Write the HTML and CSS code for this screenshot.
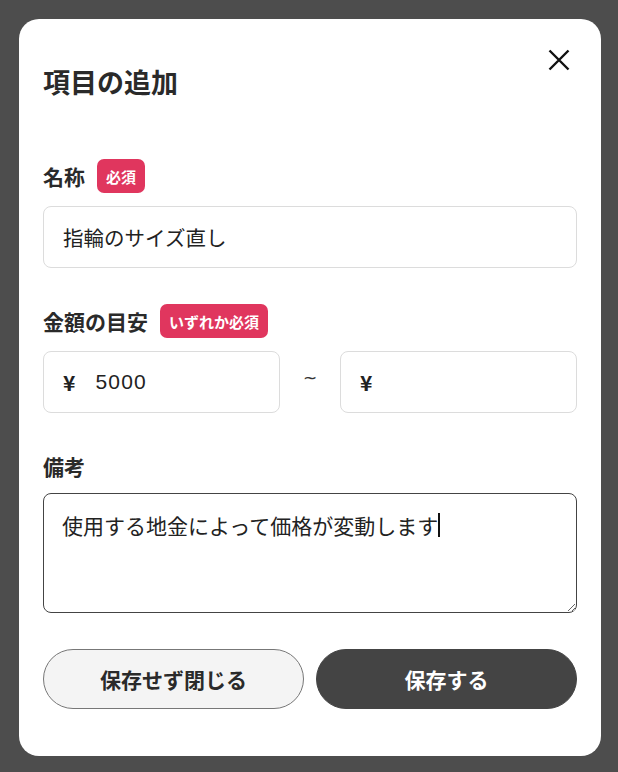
FILE: index.html
```html
<!DOCTYPE html>
<html lang="ja">
<head>
    <meta charset="UTF-8">
    <meta name="viewport" content="width=device-width, initial-scale=1.0">
    <title>項目の追加</title>
    <link rel="stylesheet" href="styles.css">
</head>
<body>
    <div class="modal">
        <div class="modal-header">
            <h1 class="modal-title">項目の追加</h1>
            <button class="close-button" aria-label="閉じる">
                <svg width="22" height="22" viewBox="0 0 22 22">
                    <path d="M1.5 1.5 L20.5 20.5 M20.5 1.5 L1.5 20.5" stroke="#111" stroke-width="2.4" fill="none"/>
                </svg>
            </button>
        </div>

        <!-- 名称 -->
        <div class="field field-first">
            <div class="field-label">
                <span>名称</span>
                <span class="badge">必須</span>
            </div>
            <input class="text-input" type="text" value="指輪のサイズ直し">
        </div>

        <!-- 金額の目安 -->
        <div class="field">
            <div class="field-label">
                <span>金額の目安</span>
                <span class="badge">いずれか必須</span>
            </div>
            <div class="price-row">
                <div class="price-input">
                    <span class="yen">¥</span>
                    <input type="text" value="5000">
                </div>
                <span class="tilde">~</span>
                <div class="price-input">
                    <span class="yen">¥</span>
                    <input type="text" value="">
                </div>
            </div>
        </div>

        <!-- 備考 -->
        <div class="field">
            <div class="field-label field-label-tight">
                <span>備考</span>
            </div>
            <div class="note-wrap">
                <textarea class="note-input">使用する地金によって価格が変動します</textarea>
                <span class="caret"></span>
            </div>
        </div>

        <div class="modal-actions">
            <button class="btn btn-cancel">保存せず閉じる</button>
            <button class="btn btn-save">保存する</button>
        </div>
    </div>
</body>
</html>
```

FILE: styles.css
```css
body {
    margin: 0;
    background: #4d4d4d;
    font-family: "Noto Sans CJK JP", "Noto Sans", sans-serif;
    color: #222;
}

.modal {
    box-sizing: border-box;
    width: 582px;
    margin: 19px;
    padding: 21px 24px 47px;
    background: #fff;
    border-radius: 20px;
}

.modal-header {
    display: flex;
    justify-content: space-between;
    align-items: flex-start;
}

.modal-title {
    margin: 24px 0 0;
    font-size: 27px;
    line-height: 36px;
    font-weight: 700;
    color: #2a2a2a;
}

.close-button {
    width: 40px;
    height: 40px;
    margin-right: -2px;
    padding: 0;
    border: none;
    background: none;
    display: flex;
    align-items: center;
    justify-content: center;
    cursor: pointer;
}

.field {
    margin-top: 36px;
}

.field-first {
    margin-top: 59px;
}

.field-label {
    display: flex;
    align-items: center;
    gap: 12px;
    height: 34px;
    margin-bottom: 13px;
    font-size: 21px;
    font-weight: 700;
    color: #2a2a2a;
}

.field-label-tight {
    margin-bottom: 10px;
}

.badge {
    display: inline-flex;
    align-items: center;
    height: 34px;
    padding: 0 9px;
    background: #e0365e;
    color: #fff;
    font-size: 15px;
    font-weight: 700;
    border-radius: 7px;
}

.text-input {
    box-sizing: border-box;
    display: block;
    width: 100%;
    height: 62px;
    padding: 0 19px;
    border: 1px solid #dcdcdc;
    border-radius: 8px;
    font-family: inherit;
    font-size: 20.5px;
    color: #222;
    outline: none;
}

.price-row {
    display: grid;
    grid-template-columns: minmax(0, 1fr) 60px minmax(0, 1fr);
    align-items: center;
}

.price-input {
    box-sizing: border-box;
    height: 62px;
    display: flex;
    align-items: center;
    padding: 0 19px;
    border: 1px solid #dcdcdc;
    border-radius: 8px;
}

.price-input input {
    flex: 1;
    min-width: 0;
    margin-left: 20px;
    padding: 0;
    border: none;
    outline: none;
    font-family: "Liberation Sans", "Noto Sans", sans-serif;
    font-size: 21px;
    letter-spacing: 1.2px;
    color: #222;
}

.yen {
    font-size: 21px;
    font-weight: 700;
    color: #222;
}

.tilde {
    text-align: center;
    font-family: "DejaVu Sans", sans-serif;
    font-size: 17px;
    color: #333;
    margin-top: -8px;
}

.note-wrap {
    position: relative;
}

.note-input {
    display: block;
    box-sizing: border-box;
    width: 100%;
    height: 120px;
    padding: 15px 18px;
    border: 1px solid #444;
    border-radius: 8px;
    font-family: inherit;
    font-size: 21px;
    line-height: 32px;
    color: #222;
    resize: vertical;
    outline: none;
}

/* focused caret after the text */
.caret {
    position: absolute;
    left: 395px;
    top: 20px;
    width: 2px;
    height: 24px;
    background: #111;
}

.modal-actions {
    display: flex;
    gap: 12px;
    margin-top: 36px;
}

.btn {
    flex: 1;
    height: 60px;
    border-radius: 30px;
    font-family: inherit;
    font-size: 21px;
    font-weight: 700;
    cursor: pointer;
}

.btn-cancel {
    background: #f4f4f4;
    border: 1px solid #777;
    color: #2a2a2a;
}

.btn-save {
    background: #444;
    border: 1px solid #444;
    color: #fff;
}
```
